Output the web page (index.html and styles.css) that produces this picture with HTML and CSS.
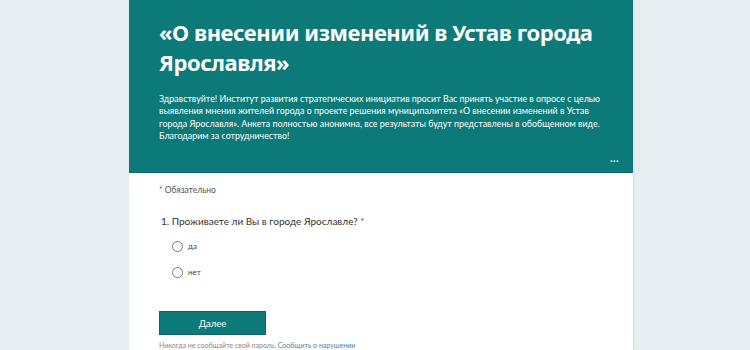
FILE: index.html
```html
<!DOCTYPE html>
<html lang="ru">
<head>
<meta charset="utf-8">
<title>Опрос</title>
<link rel="stylesheet" href="styles.css">
</head>
<body>
<main class="card">
  <header class="hero">
    <h1 class="title">«О внесении изменений в Устав города Ярославля»</h1>
    <p class="desc">Здравствуйте! Институт развития стратегических инициатив просит Вас принять участие в опросе с целью выявления мнения жителей города о проекте решения муниципалитета «О внесении изменений в Устав города Ярославля». Анкета полностью анонимна, все результаты будут представлены в обобщенном виде. Благодарим за сотрудничество!</p>
    <div class="more">···</div>
  </header>
  <section class="body">
    <p class="required"><span class="star">*</span> Обязательно</p>
    <div class="question">
      <p class="qtitle">1. Проживаете ли Вы в городе Ярославле? <span class="star">*</span></p>
      <label class="option"><span class="radio"></span><span class="otext">да</span></label>
      <label class="option"><span class="radio"></span><span class="otext">нет</span></label>
    </div>
    <button class="next">Далее</button>
    <p class="foot">Никогда не сообщайте свой пароль. <span class="link">Сообщить о нарушении</span></p>
  </section>
</main>
</body>
</html>
```
FILE: styles.css
```css
html, body {
  margin: 0;
  padding: 0;
}
body {
  background: #e5eff1;
  font-family: "Lato", "Noto Sans", sans-serif;
  height: 350px;
  overflow: hidden;
}
.card {
  width: 504px;
  margin-left: 129px;
  background: #ffffff;
  min-height: 350px;
  box-shadow: 1px 0 2px rgba(0, 0, 0, 0.08);
}
.hero {
  background: #0b7a78;
  height: 173px;
  box-sizing: border-box;
  padding: 17px 28px 0 30px;
  display: flex;
  flex-direction: column;
  color: #ffffff;
  border-bottom: 1px solid #0a6a68;
}
.title {
  margin: 0;
  font-family: "Noto Sans", sans-serif;
  font-size: 22px;
  line-height: 30px;
  font-weight: 700;
  letter-spacing: -0.45px;
}
.desc {
  margin: 16px 0 0 0;
  font-size: 8.9px;
  line-height: 12.4px;
}
.more {
  margin-top: auto;
  align-self: flex-end;
  margin-right: -14px;
  font-size: 12px;
  line-height: 12px;
  padding-bottom: 5px;
  color: #d8f0f0;
}
.body {
  padding: 10px 30px 0 30px;
  display: flex;
  flex-direction: column;
  align-items: flex-start;
}
.required {
  margin: 0;
  font-size: 8.5px;
  line-height: 14px;
  color: #555;
}
.star {
  color: #c0392b;
}
.question {
  margin-top: 16px;
  display: flex;
  flex-direction: column;
}
.qtitle {
  margin: 0 0 0 2px;
  font-size: 10px;
  line-height: 16px;
  color: #333;
}
.option {
  display: flex;
  align-items: center;
  gap: 5px;
  margin-left: 13px;
  margin-top: 9px;
  height: 16px;
}
.option + .option {
  margin-top: 10px;
}
.radio {
  width: 9px;
  height: 9px;
  border: 1px solid #777;
  border-radius: 50%;
  background: #fff;
}
.otext {
  font-size: 8px;
  color: #444;
}
.next {
  margin-top: 31px;
  width: 107px;
  height: 24px;
  background: #0b7a78;
  border: 1px solid #096664;
  color: #ffffff;
  font-family: inherit;
  font-size: 9.5px;
  padding: 0;
}
.foot {
  margin: 6px 0 0 0;
  font-size: 7px;
  line-height: 9px;
  color: #888;
}
.link {
  color: #4a7fb0;
}
```
